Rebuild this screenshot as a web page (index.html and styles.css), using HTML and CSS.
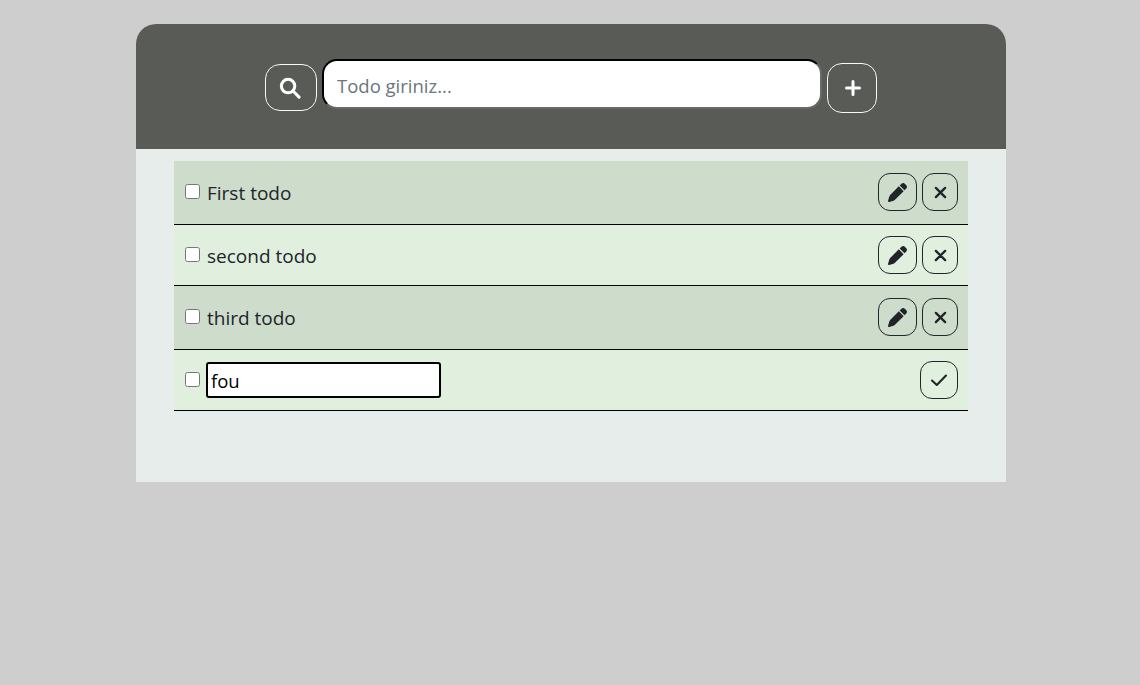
FILE: index.html
```html
<!DOCTYPE html>
<html lang="tr">
<head>
<meta charset="utf-8">
<title>Todo</title>
<link rel="stylesheet" href="styles.css">
</head>
<body>
<main class="card">
  <header class="top">
    <button class="btn-light btn-search" type="button" aria-label="Ara">
      <svg width="22" height="22" viewBox="0 0 16 16" fill="none" stroke="currentColor" stroke-width="2.2" stroke-linecap="round"><circle cx="6.6" cy="6.6" r="4.9"/><path d="M10.4 10.4 14.6 14.6"/></svg>
    </button>
    <input class="main-input" type="text" placeholder="Todo giriniz...">
    <button class="btn-light btn-add" type="button" aria-label="Ekle">
      <svg width="18" height="18" viewBox="0 0 18 18" stroke="currentColor" stroke-width="3" stroke-linecap="round"><path d="M9 2.500v13M2.500 9h13"/></svg>
    </button>
  </header>
  <ul class="list">
    <li class="row row-odd">
      <input class="check" type="checkbox">
      <span class="label">First todo</span>
      <div class="actions">
        <button class="btn-dark btn-edit" type="button" aria-label="Düzenle"><svg width="19" height="19" viewBox="0 0 512 512" fill="currentColor"><path d="M362.7 19.3 314.3 67.7l130 130 48.4-48.4c25-25 25-65.5 0-90.5l-39.4-39.5c-25-25-65.5-25-90.5 0zM291.3 90.7 58 324c-10.400 10.400-18 23.300-22.200 37.400L1 481.200c-2.500 8.400-.2 17.500 6.100 23.700s15.300 8.500 23.700 6.100l119.800-35.200c14.100-4.200 27-11.800 37.400-22.200l233.300-233.300z"/></svg></button>
        <button class="btn-dark btn-close" type="button" aria-label="Sil"><svg width="13" height="13" viewBox="0 0 14 14" stroke="currentColor" stroke-width="2.5" stroke-linecap="round"><path d="M2 2l10 10M12 2 2 12"/></svg></button>
      </div>
    </li>
    <li class="row row-even">
      <input class="check" type="checkbox">
      <span class="label">second todo</span>
      <div class="actions">
        <button class="btn-dark btn-edit" type="button" aria-label="Düzenle"><svg width="19" height="19" viewBox="0 0 512 512" fill="currentColor"><path d="M362.7 19.3 314.3 67.7l130 130 48.4-48.4c25-25 25-65.5 0-90.5l-39.4-39.5c-25-25-65.5-25-90.5 0zM291.3 90.7 58 324c-10.400 10.400-18 23.300-22.200 37.400L1 481.200c-2.500 8.400-.2 17.500 6.100 23.700s15.300 8.500 23.700 6.100l119.800-35.200c14.100-4.200 27-11.800 37.400-22.200l233.300-233.300z"/></svg></button>
        <button class="btn-dark btn-close" type="button" aria-label="Sil"><svg width="13" height="13" viewBox="0 0 14 14" stroke="currentColor" stroke-width="2.5" stroke-linecap="round"><path d="M2 2l10 10M12 2 2 12"/></svg></button>
      </div>
    </li>
    <li class="row row-odd">
      <input class="check" type="checkbox">
      <span class="label">third todo</span>
      <div class="actions">
        <button class="btn-dark btn-edit" type="button" aria-label="Düzenle"><svg width="19" height="19" viewBox="0 0 512 512" fill="currentColor"><path d="M362.7 19.3 314.3 67.7l130 130 48.4-48.4c25-25 25-65.5 0-90.5l-39.4-39.5c-25-25-65.5-25-90.5 0zM291.3 90.7 58 324c-10.400 10.400-18 23.300-22.200 37.400L1 481.200c-2.500 8.400-.2 17.500 6.100 23.700s15.300 8.500 23.700 6.100l119.800-35.200c14.100-4.200 27-11.800 37.400-22.200l233.300-233.300z"/></svg></button>
        <button class="btn-dark btn-close" type="button" aria-label="Sil"><svg width="13" height="13" viewBox="0 0 14 14" stroke="currentColor" stroke-width="2.5" stroke-linecap="round"><path d="M2 2l10 10M12 2 2 12"/></svg></button>
      </div>
    </li>
    <li class="row row-even">
      <input class="check" type="checkbox">
      <input class="edit-input" type="text" value="fou">
      <div class="actions">
        <button class="btn-dark btn-save" type="button" aria-label="Kaydet"><svg width="18" height="14" viewBox="0 0 18 14" fill="none" stroke="currentColor" stroke-width="2.1" stroke-linecap="round" stroke-linejoin="round"><path d="M2 7.500 6.800 12 16 2.500"/></svg></button>
      </div>
    </li>
  </ul>
</main>
</body>
</html>
```

FILE: styles.css
```css
* {
  box-sizing: border-box;
}

html, body {
  height: 100%;
}

body {
  margin: 0;
  padding: 24px 0 0 2px;
  background: #cecece;
  font-family: "Open Sans", "Noto Sans", "Liberation Sans", sans-serif;
  color: #212529;
  overflow: hidden;
}

.card {
  width: 870px;
  height: 458px;
  margin: 0 auto;
  background: #e7edeb;
  border-radius: 20px 20px 0 0;
}

.top {
  height: 125px;
  padding-top: 35px;
  display: flex;
  justify-content: center;
  align-items: flex-start;
  gap: 5px;
  background: #595b57;
  border-radius: 20px 20px 0 0;
}

.btn-light {
  display: flex;
  align-items: center;
  justify-content: center;
  padding: 0;
  color: #fff;
  background: transparent;
  border: 1px solid #f8f9fa;
  border-radius: 15px;
}

.btn-search {
  width: 52px;
  height: 47px;
  margin-top: 5px;
  padding-right: 2px;
}

.btn-add {
  width: 50px;
  height: 50px;
  margin-top: 4px;
  padding-left: 1px;
}

.main-input {
  width: 500px;
  height: 50px;
  padding: 2px 13px 0;
  font: 400 18.500px "Open Sans", "Noto Sans", sans-serif;
  background: #fff;
  border-width: 2px;
  border-style: inset;
  border-color: #1c1c1c #6a6a6a #6a6a6a #1c1c1c;
  border-radius: 15px;
  outline: none;
}

.main-input::placeholder {
  color: #6c757d;
}

.list {
  margin: 12px 38px 0;
  padding: 0;
  list-style: none;
}

.row {
  display: flex;
  align-items: center;
  padding-left: 11px;
  padding-right: 10px;
  border-bottom: 1px solid #000;
}

.row-odd {
  padding-top: 12px;
  padding-bottom: 13px;
  background: #cddccb;
}

.row-even {
  padding-top: 11px;
  padding-bottom: 11px;
  background: #e0efde;
}

.check {
  width: 15px;
  height: 15px;
  margin: 0 7px 1px 0;
  flex: none;
}

.label {
  font-size: 19px;
  line-height: 28px;
  margin-top: 2px;
}

.edit-input {
  width: 235px;
  height: 36px;
  margin-left: -1px;
  padding: 0 3px;
  font: 400 18.500px "Open Sans", "Noto Sans", sans-serif;
  color: #000;
  background: #fff;
  border: 2px solid #000;
  border-radius: 3px;
  outline: none;
}

.actions {
  display: flex;
  gap: 5px;
  margin-left: auto;
}

.btn-dark {
  display: flex;
  align-items: center;
  justify-content: center;
  height: 38px;
  padding: 0;
  color: #212529;
  background: transparent;
  border: 1px solid #212529;
  border-radius: 12px;
}

.btn-edit {
  width: 39px;
}

.btn-close {
  width: 36px;
}

.btn-save {
  width: 38px;
}
```
